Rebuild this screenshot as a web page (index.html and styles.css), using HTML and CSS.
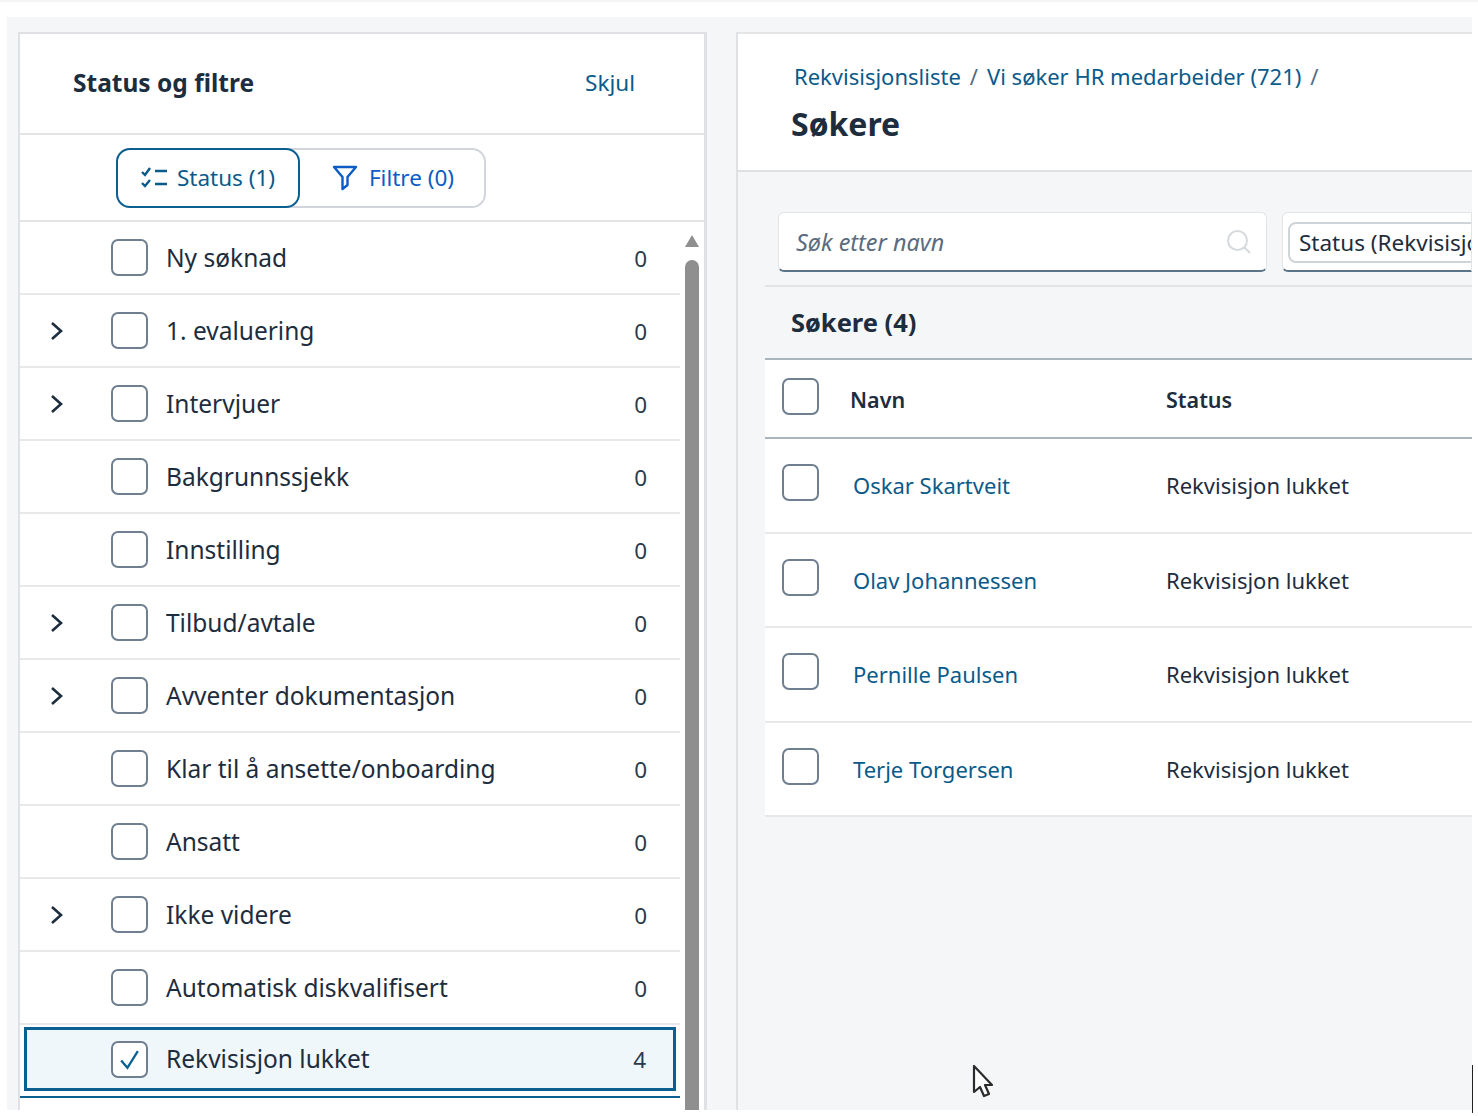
FILE: index.html
```html
<!DOCTYPE html>
<html lang="no">
<head>
<meta charset="utf-8">
<title>Søkere</title>
<link rel="stylesheet" href="styles.css">
</head>
<body>
<div class="page">
  <div class="shell">
    <aside class="filters">
      <header class="filters-head">
        <h2>Status og filtre</h2>
        <a class="hide-link">Skjul</a>
      </header>
      <div class="segment-bar">
        <div class="segment">
          <button class="seg seg-active">
            <svg class="seg-icon" viewBox="0 0 28 22" fill="none" stroke="currentColor" stroke-width="2.4"><path d="M1 5l3 3 5-7M1 16l3 3 5-6M14 4h12M14 17h12"/></svg>
            <span class="seg-text">Status (1)</span>
          </button>
          <button class="seg seg-plain">
            <svg class="seg-icon-f" viewBox="0 0 26 26" fill="none" stroke="currentColor" stroke-width="2.4" stroke-linejoin="round"><path d="M2 2h22l-8.5 10v8l-5 4V12z"/></svg>
            <span class="seg-text">Filtre (0)</span>
          </button>
        </div>
      </div>
      <div class="list-wrap">
        <ul class="status-list">
          <li class="row"><span class="chev"></span><span class="box"></span><span class="label">Ny søknad</span><span class="count">0</span></li>
          <li class="row"><span class="chev"><svg viewBox="0 0 14 20" fill="none" stroke="currentColor" stroke-width="2.6"><path d="M2 2l9 8-9 8"/></svg></span><span class="box"></span><span class="label">1. evaluering</span><span class="count">0</span></li>
          <li class="row"><span class="chev"><svg viewBox="0 0 14 20" fill="none" stroke="currentColor" stroke-width="2.6"><path d="M2 2l9 8-9 8"/></svg></span><span class="box"></span><span class="label">Intervjuer</span><span class="count">0</span></li>
          <li class="row"><span class="chev"></span><span class="box"></span><span class="label">Bakgrunnssjekk</span><span class="count">0</span></li>
          <li class="row"><span class="chev"></span><span class="box"></span><span class="label">Innstilling</span><span class="count">0</span></li>
          <li class="row"><span class="chev"><svg viewBox="0 0 14 20" fill="none" stroke="currentColor" stroke-width="2.6"><path d="M2 2l9 8-9 8"/></svg></span><span class="box"></span><span class="label">Tilbud/avtale</span><span class="count">0</span></li>
          <li class="row"><span class="chev"><svg viewBox="0 0 14 20" fill="none" stroke="currentColor" stroke-width="2.6"><path d="M2 2l9 8-9 8"/></svg></span><span class="box"></span><span class="label">Avventer dokumentasjon</span><span class="count">0</span></li>
          <li class="row"><span class="chev"></span><span class="box"></span><span class="label">Klar til å ansette/onboarding</span><span class="count">0</span></li>
          <li class="row"><span class="chev"></span><span class="box"></span><span class="label">Ansatt</span><span class="count">0</span></li>
          <li class="row"><span class="chev"><svg viewBox="0 0 14 20" fill="none" stroke="currentColor" stroke-width="2.6"><path d="M2 2l9 8-9 8"/></svg></span><span class="box"></span><span class="label">Ikke videre</span><span class="count">0</span></li>
          <li class="row"><span class="chev"></span><span class="box"></span><span class="label">Automatisk diskvalifisert</span><span class="count">0</span></li>
          <li class="row-selected">
            <div class="row-focus"><span class="chev"></span><span class="box"><svg viewBox="0 0 24 24" fill="none" stroke="currentColor" stroke-width="2.2"><path d="M4 13l6 7L20 4"/></svg></span><span class="label">Rekvisisjon lukket</span><span class="count">4</span></div>
          </li>
        </ul>
        <div class="scrollbar">
          <span class="scroll-up"></span>
          <span class="scroll-thumb"></span>
        </div>
      </div>
    </aside>
    <main class="content">
      <header class="content-head">
        <nav class="crumbs"><a>Rekvisisjonsliste</a><i>/</i><a>Vi søker HR medarbeider (721)</a><i>/</i></nav>
        <h1>Søkere</h1>
      </header>
      <div class="content-body">
        <div class="toolbar">
          <div class="search"><em>Søk etter navn</em>
            <svg class="search-icon" viewBox="0 0 26 26" fill="none" stroke="currentColor" stroke-width="2"><circle cx="11.5" cy="11.5" r="9.5"/><path d="M18 18l6 6"/></svg>
          </div>
          <div class="status-filter"><span class="status-inner">Status (Rekvisisjon lukket)</span></div>
        </div>
        <h3 class="table-title">Søkere (4)</h3>
        <div class="table">
          <div class="t-head"><span class="box"></span><span class="col-name">Navn</span><span class="col-status">Status</span></div>
          <div class="t-row"><span class="box"></span><a class="col-link">Oskar Skartveit</a><span class="col-status">Rekvisisjon lukket</span></div>
          <div class="t-row"><span class="box"></span><a class="col-link">Olav Johannessen</a><span class="col-status">Rekvisisjon lukket</span></div>
          <div class="t-row"><span class="box"></span><a class="col-link">Pernille Paulsen</a><span class="col-status">Rekvisisjon lukket</span></div>
          <div class="t-row"><span class="box"></span><a class="col-link">Terje Torgersen</a><span class="col-status">Rekvisisjon lukket</span></div>
        </div>
      </div>
      <svg class="cursor" viewBox="0 0 22 34"><path d="M2 2v26l6-5 4 9 5-2-4-9h7z" fill="#fff" stroke="#2b2b2b" stroke-width="2.2" stroke-linejoin="round"/></svg>
    </main>
  </div>
  <span class="edge-line"></span>
</div>
</body>
</html>
```
FILE: styles.css
```css
* { box-sizing: border-box; }
html, body { margin: 0; height: 100%; overflow: hidden; background: #fff; }
body { font-family: "Noto Sans", "Liberation Sans", sans-serif; color: #1d2d3e; }
h1, h2, h3, ul { margin: 0; padding: 0; list-style: none; }
.page { position: relative; height: 1116px; width: 1478px; border-top: 2px solid #f4f4f4; padding: 15px 6px 5px 7px; }
.shell { display: flex; height: 1093px; background: #f5f6f7; padding: 15px 0 0 11px; gap: 29px; overflow: hidden; }
.filters { width: 689px; flex: none; background: #fff; border: 2px solid #dfe1e4; border-bottom: 0; border-right-width: 3px; }
.filters-head { height: 101px; display: flex; align-items: center; justify-content: space-between; padding: 0 69px 2px 53px; border-bottom: 2px solid #e2e4e6; }
.filters-head h2 { font-size: 24.5px; font-weight: 700; }
.hide-link { font-size: 22.5px; color: #0a5a8a; }
.segment-bar { height: 87px; padding: 13px 0 0 96px; border-bottom: 2px solid #e2e4e6; }
.segment { display: flex; width: 370px; height: 60px; border: 2px solid #d2d6da; border-radius: 14px; }
.seg { background: none; border: 0; font: inherit; font-size: 22.5px; display: flex; align-items: center; padding: 0; }
.seg-text { padding-bottom: 2px; }
.seg-active { width: 184px; height: 60px; margin: -2px 0 0 -2px; border: 2px solid #0a6091; border-radius: 14px; color: #0a5a8a; justify-content: center; gap: 8px; background: #fff; }
.seg-plain { flex: 1; color: #0b5cc4; justify-content: center; gap: 11px; padding-left: 2px; }
.seg-icon { width: 28px; height: 22px; }
.seg-icon-f { width: 26px; height: 26px; }
.list-wrap { display: flex; }
.status-list { width: 660px; flex: none; }
.row { height: 73px; display: flex; align-items: center; border-bottom: 2px solid #e6e8ea; }
.chev { width: 91px; flex: none; padding-left: 30px; display: flex; color: #1d2d3e; }
.chev svg { width: 14px; height: 20px; }
.box { width: 37px; height: 37px; flex: none; border: 2px solid #6f7f90; border-radius: 7px; background: #fff; display: flex; color: #0a6091; padding: 4px; }
.label { flex: 1; padding: 0 0 1px 18px; font-size: 24.5px; white-space: nowrap; }
.count { font-size: 22.5px; padding: 1px 33px 0 0; color: #2a3a4b; }
.row-selected { height: 73px; padding: 2px 3px 5px 4px; border-bottom: 2px solid #0a6091; }
.row-focus { height: 64px; display: flex; align-items: center; background: #eff7fb; border: 3px solid #0a6091; margin-right: 1px; }
.row-focus .chev { width: 84px; }
.row-focus .count { padding-right: 27px; }
.scrollbar { width: 24px; display: flex; flex-direction: column; align-items: center; padding-top: 13px; gap: 13px; height: 888px; }
.scroll-up { width: 0; height: 0; border: 7px solid transparent; border-top: 0; border-bottom: 12px solid #8f8f8f; }
.scroll-thumb { width: 14px; flex: 1; background: #8f8f8f; border-radius: 7px 7px 0 0; }
.content { flex: 1; min-width: 0; position: relative; background: #f5f6f7; display: flex; flex-direction: column; border-left: 2px solid #dfe1e4; overflow: hidden; }
.content-head { height: 140px; background: #fff; border-top: 2px solid #e2e4e6; border-bottom: 2px solid #dfe1e4; padding: 26px 0 0 56px; }
.crumbs { display: flex; align-items: center; font-size: 22px; color: #0a5a8a; line-height: 32px; }
.crumbs i { font-style: normal; color: #556b82; margin: 0 9px; }
.content-head h1 { font-size: 32px; font-weight: 700; margin: 10px 0 0 -3px; line-height: 44px; }
.content-body { flex: 1; padding: 0 0 0 27px; }
.toolbar { display: flex; gap: 15px; height: 115px; padding: 40px 0 0 13px; border-bottom: 2px solid #e2e4e6; }
.search { width: 489px; height: 60px; background: #fff; border: 1px solid #e2e4e6; border-bottom: 2px solid #5c7488; border-radius: 6px; display: flex; align-items: center; justify-content: space-between; padding: 0 14px 0 17px; }
.search em { font-size: 23.4px; color: #5a6c7e; }
.search-icon { width: 26px; height: 26px; color: #d6dadd; }
.status-filter { flex: 1; min-width: 0; height: 60px; background: #fff; border: 1px solid #e2e4e6; border-bottom: 2px solid #5c7488; border-radius: 6px 0 0 6px; padding: 9px 0 0 5px; overflow: hidden; }
.status-inner { display: block; height: 41px; width: 400px; line-height: 37px; font-size: 22.5px; white-space: nowrap; border: 2px solid #cfd4d9; border-radius: 8px; padding-left: 9px; }
.table-title { height: 71px; line-height: 70px; padding-left: 26px; font-size: 25.5px; font-weight: 700; }
.table { background: #fff; border-top: 2px solid #a9b4be; }
.t-head { height: 79px; display: flex; align-items: center; padding: 2px 0 0 17px; border-bottom: 2px solid #a9b4be; font-size: 21.5px; font-weight: 600; }
.t-row { height: 94.5px; display: flex; align-items: center; padding: 0 0 0 17px; border-bottom: 2px solid #e6e8ea; font-size: 22px; }
.t-head .box { margin-top: -7px; }
.t-row .box { margin-top: -5px; }
.col-name { width: 316px; margin-left: 31px; }
.col-link { width: 313px; margin-left: 34px; color: #0a5a8a; }
.col-status { white-space: nowrap; }
.cursor { position: absolute; left: 234px; top: 1032px; width: 22px; height: 34px; }
.edge-line { position: absolute; left: 1472px; top: 1063px; width: 1px; height: 48px; background: #222; }
```
